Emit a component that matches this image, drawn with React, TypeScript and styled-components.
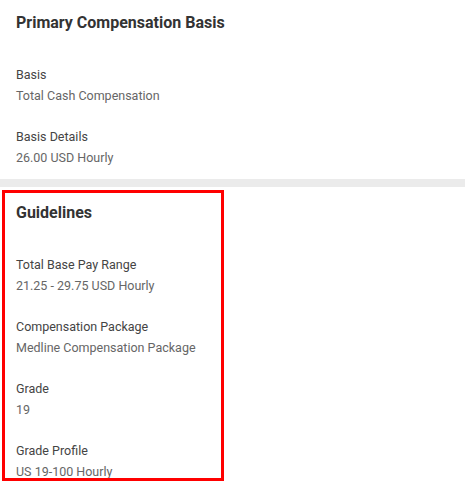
import React from "react";
import styled, {createGlobalStyle} from "styled-components";

const GlobalStyle = createGlobalStyle`
  html, body {
    margin: 0;
    padding: 0;
    background: #fff;
    font-family: Roboto, "Liberation Sans", Arial, sans-serif;
  }
`;

type Field = {label: string, value: string};

const basisFields: Field[] = [
  {label: 'Basis', value: 'Total Cash Compensation'},
  {label: 'Basis Details', value: '26.00 USD Hourly'},
];

const guidelineFields: Field[] = [
  {label: 'Total Base Pay Range', value: '21.25 - 29.75 USD Hourly'},
  {label: 'Compensation Package', value: 'Medline Compensation Package'},
  {label: 'Grade', value: '19'},
  {label: 'Grade Profile', value: 'US 19-100 Hourly'},
];

const FieldList = ({fields}: {fields: Field[]}) => (
  <Fields>
    {fields.map(f => (
      <div key={f.label}>
        <Label>{f.label}</Label>
        <Value>{f.value}</Value>
      </div>
    ))}
  </Fields>
);

export default function App() {
  return <Page>
    <GlobalStyle/>

    <Section>
      <Title>Primary Compensation Basis</Title>
      <FieldList fields={basisFields}/>
    </Section>

    <Divider/>

    <HighlightWrap>
      <Highlight>
        <Title>Guidelines</Title>
        <FieldList fields={guidelineFields}/>
      </Highlight>
    </HighlightWrap>
  </Page>
}

const Page = styled.div`
  width: 465px;
  height: 481px;
  overflow: hidden;
  background: #fff;
`;

const Section = styled.section`
  padding: 12px 16px 11px;
`;

const Title = styled.h2`
  margin: 0 0 30px;
  font-size: 16px;
  line-height: 22px;
  font-weight: 700;
  color: #333;
`;

const Fields = styled.div`
  display: flex;
  flex-direction: column;
  gap: 20px;
`;

const Label = styled.div`
  font-size: 12.5px;
  line-height: 21px;
  font-weight: 400;
  color: #444;
`;

const Value = styled.div`
  font-size: 12.5px;
  line-height: 21px;
  color: #666;
`;

const Divider = styled.div`
  height: 8px;
  background: #ebebeb;
`;

const HighlightWrap = styled.div`
  padding: 3px 0 0 2px;
`;

const Highlight = styled.div`
  box-sizing: border-box;
  width: 222px;
  height: 291px;
  overflow: hidden;
  border: 3px solid #ff0000;
  padding: 9px 0 0 11px;
`;
